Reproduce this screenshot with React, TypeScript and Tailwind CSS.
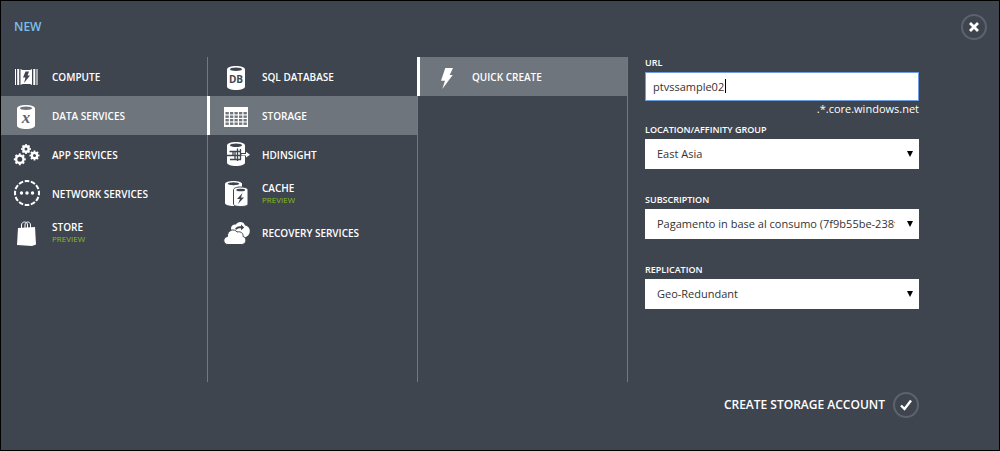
import { useState, type FocusEvent, type ReactNode } from 'react'
import clsx from 'clsx'

type Item = { id: string; label: string; icon: ReactNode; preview?: boolean }

const DEFAULT_URL = 'ptvssample02'

const Icon = ({ children }: { children: ReactNode }) => (
  <svg viewBox="0 0 27 27" className="w-[27px] h-[27px] shrink-0 overflow-visible" fill="#fff" aria-hidden="true">
    {children}
  </svg>
)

const Cylinder = ({ y = 3, hole = '#3f454f' }: { y?: number; hole?: string }) => (
  <g transform={`translate(0 ${y})`}>
    <path d="M4 3.500C4 1.500 8 0 13 0s9 1.500 9 3.500v17c0 2-4 3.500-9 3.500s-9-1.500-9-3.500z" />
    <ellipse cx="13" cy="3.300" rx="6" ry="1.700" fill={hole} />
  </g>
)

const Gear = ({ x, y, r }: { x: number; y: number; r: number }) => (
  <g transform={`translate(${x} ${y})`} fill="none" stroke="#fff">
    <circle r={r - 2.3} strokeWidth="2.400" />
    <circle r={r - 0.8} strokeWidth="1.600" pathLength="16" strokeDasharray="1 1" strokeDashoffset="0.500" />
  </g>
)

const mainItems: Item[] = [
  {
    id: 'compute',
    label: 'COMPUTE',
    icon: (
      <Icon>
        <path d="M2 6h1v16H2zM4.200 6h2v16h-2zM7.500 6l2 1h7.500l2-1v16l-2-1H9.500l-2 1zM20.300 6h2v16h-2zM23.500 6h1v16h-1z" />
        <path d="M12.500 8.500h3.500l-1.500 4H17L11 20l1.500-5.500H10z" fill="#3f454f" />
      </Icon>
    ),
  },
  {
    id: 'data',
    label: 'DATA SERVICES',
    icon: (
      <Icon>
        <Cylinder y={3} hole="#6e757d" />
        <text x="13" y="21" textAnchor="middle" fill="#5c636c" className="font-['Liberation_Serif',serif] text-[17px] font-bold italic">x</text>
      </Icon>
    ),
  },
  {
    id: 'app',
    label: 'APP SERVICES',
    icon: (
      <Icon>
        <Gear x={13} y={8} r={5} />
        <Gear x={21.5} y={14.5} r={5} />
        <Gear x={6.8} y={18.3} r={6} />
      </Icon>
    ),
  },
  {
    id: 'network',
    label: 'NETWORK SERVICES',
    icon: (
      <Icon>
        <circle cx="14" cy="13" r="12" fill="none" stroke="#fff" strokeWidth="2" pathLength="48" strokeDasharray="3 1" strokeDashoffset="1.500" />
        <circle cx="8.500" cy="13" r="1.700" />
        <circle cx="14" cy="13" r="1.700" />
        <circle cx="19.500" cy="13" r="1.700" />
      </Icon>
    ),
  },
  {
    id: 'store',
    label: 'STORE',
    preview: true,
    icon: (
      <Icon>
        <path d="M5 9l17-1 1 17.500-4 1.500L4 26z" />
        <path d="M8.500 10V6c0-4 6-4 6 0v3M12 9V6c0-4 5.500-4 5.500 0v3" fill="none" stroke="#fff" strokeWidth="1" />
      </Icon>
    ),
  },
]

const dataItems: Item[] = [
  {
    id: 'sql',
    label: 'SQL DATABASE',
    icon: (
      <Icon>
        <Cylinder />
        <text x="13" y="20" textAnchor="middle" fill="#3f454f" className="font-['Open_Sans',sans-serif] text-[10px] font-bold">DB</text>
      </Icon>
    ),
  },
  {
    id: 'storage',
    label: 'STORAGE',
    icon: (
      <Icon>
        <path d="M1 5h24v20H1z" />
        {[10, 13.5, 17, 20.5].map(y =>
          [2.5, 7, 11.5, 16, 20.5].map(x => <rect key={`${x}-${y}`} x={x} y={y} width="3.300" height="2.400" fill="#6e757d" />)
        )}
      </Icon>
    ),
  },
  {
    id: 'hdinsight',
    label: 'HDINSIGHT',
    icon: (
      <Icon>
        <Cylinder y={1} />
        <path d="M6.500 10.500H12v8h-5M4 14.500h14M10 10.500v4M14.500 7.500v12.500M12 10.500h5.500v8H12M17.500 8v11" fill="none" stroke="#3f454f" strokeWidth="1.300" />
        <path d="M18 12h9v3h-9z" fill="#3f454f" />
        <path d="M18.500 12.900h4.500V10.800l4 2.900-4 2.900v-2.100h-4.500z" />
      </Icon>
    ),
  },
  {
    id: 'cache',
    label: 'CACHE',
    preview: true,
    icon: (
      <Icon>
        <path d="M2 4c0-2 4-3 8.500-3S19 2 19 4v19c0 2-4 3-8.500 3S2 25 2 23z" />
        <ellipse cx="10.500" cy="3.800" rx="5.800" ry="1.500" fill="#3f454f" />
        <path d="M10.500 10c0-2 3-3 7.200-3s7.300 1 7.300 3v14c0 1.700-3 2.500-7.300 2.500s-7.200-.8-7.200-2.500z" stroke="#3f454f" strokeWidth="1" />
        <ellipse cx="17.700" cy="10" rx="4.500" ry="1.300" fill="#3f454f" />
        <path d="M19.500 13l-5.500 6h3l-2 5 6-6.500h-3z" fill="#3f454f" />
      </Icon>
    ),
  },
  {
    id: 'recovery',
    label: 'RECOVERY SERVICES',
    icon: (
      <Icon>
        <path d="M8 9.500C8 6 11 5 13 5.500c1.500-3.500 8-3.500 9 1 4 .5 5.500 4 4.500 7.500-.7 2.500-3 4-5.500 4.500L9 13z" />
        <path d="M12 10c1.200-2 3-3 6-2.700V5.500l3.200 2.900L18 11.300V9.200c-2-.2-3.200.2-4.500 1.500z" fill="#3f454f" />
        <path d="M5 25.500c-5.500 0-5.500-7.500-.5-8C4 11 11.500 9 14 13c4-1 6.500 1.500 6 4.500 4 .5 4 8-1.500 8z" stroke="#3f454f" strokeWidth="1" />
      </Icon>
    ),
  },
]

const createItems: Item[] = [
  {
    id: 'quick',
    label: 'QUICK CREATE',
    icon: (
      <Icon>
        <path d="M12.300 5H20l-3.300 7h3L9.300 26l2.700-8.300H8z" />
      </Icon>
    ),
  },
]

function MenuColumn({ label, items, initial, nested, last }: { label: string; items: Item[]; initial: string; nested?: boolean; last?: boolean }) {
  const [active, setActive] = useState(initial)

  return (
    <nav aria-label={label} className={clsx('min-h-[325px]', nested && 'border-l border-[#737981]', last && 'border-r')}>
      {items.map(item => (
        <button
          key={item.id}
          type="button"
          onClick={() => setActive(item.id)}
          className={clsx(
            'flex h-[39px] items-center gap-3 text-left',
            nested ? '-ml-px w-[calc(100%+1px)] border-l-[3px] pl-[13px]' : 'w-full pl-3',
            active === item.id ? 'border-white bg-[#6e757d]' : 'border-transparent'
          )}
        >
          {item.icon}
          <span className="text-[10px] leading-3 font-semibold">
            {item.label}
            {item.preview && <span className="block text-[8px] font-normal text-[#86bd1c]">PREVIEW</span>}
          </span>
        </button>
      ))}
    </nav>
  )
}

function SelectField({ id, label, options }: { id: string; label: string; options: string[] }) {
  return (
    <div>
      <label htmlFor={id} className="mb-[3px] block text-[9px] leading-3 font-semibold">{label}</label>
      <div className="relative">
        <select id={id} className="block h-[30px] w-full appearance-none bg-white pr-6 pl-3 text-[11px] text-[#333]">
          {options.map(o => <option key={o}>{o}</option>)}
        </select>
        <svg viewBox="0 0 6 6" className="pointer-events-none absolute top-3 right-[6px] h-[6px] w-[6px]" aria-hidden="true">
          <path d="M0 0h6L3 6z" />
        </svg>
      </div>
    </div>
  )
}

export default function App() {
  const [url, setUrl] = useState(DEFAULT_URL)
  const untouched = url === DEFAULT_URL

  const moveCaretToEnd = (e: FocusEvent<HTMLInputElement>) => {
    e.target.setSelectionRange(e.target.value.length, e.target.value.length)
  }

  return (
    <div className="min-h-screen border border-black bg-[#3f454f] font-['Open_Sans','Noto_Sans',sans-serif] text-white">
      <header className="mb-1 flex h-[52px] items-center justify-between pr-3 pl-[13px]">
        <h1 className="text-[12px] font-semibold text-[#7dbfe8]">NEW</h1>
        <button type="button" aria-label="Close" className="flex h-[26px] w-[26px] items-center justify-center rounded-full border-2 border-[#5d636d]">
          <svg viewBox="0 0 10 10" className="h-[10px] w-[10px]" fill="none" stroke="#fff" strokeWidth="2.800" aria-hidden="true">
            <path d="M1 1l8 8M9 1L1 9" />
          </svg>
        </button>
      </header>

      <main className="grid grid-cols-[206fr_210fr_211fr_371fr] items-start">
        <MenuColumn label="New" items={mainItems} initial="data" />
        <MenuColumn label="Data services" items={dataItems} initial="storage" nested />
        <MenuColumn label="Storage" items={createItems} initial="quick" nested last />

        <form className="ml-[17px] max-w-[274px]" onSubmit={e => e.preventDefault()}>
          <label htmlFor="url" className="mb-[3px] block text-[9px] leading-3 font-semibold">URL</label>
          <div className="relative">
            <input
              id="url"
              type="text"
              value={url}
              autoFocus
              onFocus={moveCaretToEnd}
              onChange={e => setUrl(e.target.value)}
              className={clsx(
                'block h-[29px] w-full border border-[#6f9ee0] bg-white px-[7px] text-[11px] text-[#333] outline-none',
                untouched && 'caret-transparent'
              )}
            />
            {/* steady caret until the user starts typing */}
            {untouched && <span className="pointer-events-none absolute top-[7px] left-20 h-[14px] w-px bg-black" />}
          </div>
          <p className="mb-[7px] text-right text-[11px] leading-4">.*.core.windows.net</p>

          <div className="space-y-[25px]">
            <SelectField id="location" label="LOCATION/AFFINITY GROUP" options={['East Asia']} />
            <SelectField id="subscription" label="SUBSCRIPTION" options={['Pagamento in base al consumo (7f9b55be-238f)']} />
            <SelectField id="replication" label="REPLICATION" options={['Geo-Redundant']} />
          </div>

          <button type="submit" className="mt-[83px] ml-auto flex items-center gap-2 text-[12px] font-semibold">
            CREATE STORAGE ACCOUNT
            <span className="flex h-[26px] w-[26px] items-center justify-center rounded-full border-2 border-[#5d636d]">
              <svg viewBox="0 0 12 12" className="h-3 w-3" fill="none" stroke="#fff" strokeWidth="2.400" aria-hidden="true">
                <path d="M1 6.500l3.500 3.500L11 1.500" />
              </svg>
            </span>
          </button>
        </form>
      </main>
    </div>
  )
}
